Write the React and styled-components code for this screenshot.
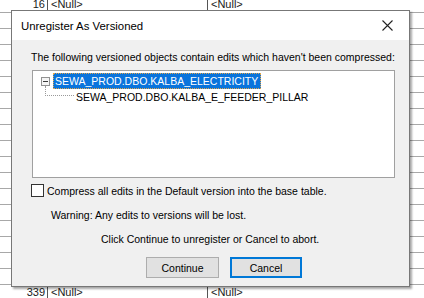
import React from "react";
import styled, { createGlobalStyle } from "styled-components";

const Global = createGlobalStyle`
  html, body {
    margin: 0;
    padding: 0;
    background: #ffffff;
    overflow: hidden;
  }
  body {
    font-family: "Liberation Sans", Arial, sans-serif;
  }
`;

const Screen = styled.div`
  position: relative;
  width: 424px;
  height: 298px;
  overflow: hidden;
  background: #ffffff;
`;

/* table that sits behind the dialog */
const Table = styled.div`
  display: flex;
  flex-direction: column;
  margin-top: -3px;
`;

const TableRow = styled.div`
  display: flex;
  height: 15px;
  border-bottom: 1px solid #a8a8a8;
  font-size: 11px;
  line-height: 15px;
  color: #1a1a1a;
`;

const NumCell = styled.span`
  width: 45px;
  text-align: right;
  padding-right: 2px;
`;

const ValCell = styled.span`
  width: ${(p) => p.w}px;
  border-left: 1px solid #555;
  padding-left: 3px;
  box-sizing: border-box;
`;

/* dialog */
const Dialog = styled.div`
  position: absolute;
  left: 11px;
  top: 10px;
  width: 399px;
  height: 277px;
  box-sizing: border-box;
  border: 1px solid #777;
  background: #f0f0f0;
  box-shadow: 2px 2px 2px rgba(0, 0, 0, 0.35);
  display: flex;
  flex-direction: column;
`;

const TitleBar = styled.div`
  height: 29px;
  background: #ffffff;
  display: flex;
  align-items: center;
  justify-content: space-between;
  padding-left: 9px;
  font-size: 11.4px;
  color: #000;
`;

const CloseBtn = styled.div`
  width: 44px;
  height: 29px;
  display: flex;
  align-items: center;
  justify-content: center;
`;

const Body = styled.div`
  display: flex;
  flex-direction: column;
  padding: 0 14px 0 19px;
  font-size: 10.5px;
  color: #000;
`;

const Label = styled.div`
  margin-top: 11px;
  line-height: 13px;
  white-space: nowrap;
`;

const Tree = styled.div`
  margin: 6px 0 0 1px;
  height: 108px;
  box-sizing: border-box;
  border: 1px solid #a0a0a0;
  background: #fff;
  padding-top: 2px;
  display: flex;
  flex-direction: column;
`;

const TreeRow = styled.div`
  display: flex;
  align-items: center;
  height: 16px;
  white-space: nowrap;
`;

const Expander = styled.span`
  width: 9px;
  height: 9px;
  box-sizing: border-box;
  margin: 0 3px 0 8px;
  border: 1px solid #919191;
  background: #f4f4f4;
  display: flex;
  align-items: center;
  justify-content: center;
  &::after {
    content: "";
    width: 5px;
    height: 1px;
    background: #3a3a3a;
  }
`;

const Selected = styled.span`
  height: 16px;
  line-height: 14px;
  box-sizing: border-box;
  padding: 0 2px 0 1px;
  background: #0a74dc;
  color: #fff;
  border: 1px dotted #e2a64c;
`;

const Branch = styled.span`
  align-self: flex-start;
  width: 29px;
  height: 10px;
  margin: -3px 2px 0 12px;
  box-sizing: border-box;
  border-left: 1px dotted #9a9a9a;
  border-bottom: 1px dotted #9a9a9a;
`;

const CheckRow = styled.label`
  display: flex;
  align-items: center;
  margin-top: 6px;
  height: 13px;
  white-space: nowrap;
`;

const Box = styled.span`
  width: 13px;
  height: 13px;
  box-sizing: border-box;
  border: 1px solid #333;
  background: #fff;
  margin: 0 3px 0 0;
`;

const Note = styled.div`
  margin-top: ${(p) => p.mt}px;
  padding-left: ${(p) => p.pl}px;
  line-height: 13px;
  white-space: nowrap;
`;

const Buttons = styled.div`
  display: flex;
  gap: 11px;
  margin: 11px 0 0 115px;
`;

const Button = styled.div`
  width: ${(p) => (p.primary ? 72 : 73)}px;
  height: 21px;
  box-sizing: border-box;
  background: #e1e1e1;
  border: ${(p) => (p.primary ? "2px solid #0078d7" : "1px solid #adadad")};
  display: flex;
  align-items: center;
  justify-content: center;
  font-size: 10.5px;
`;

const rows = Array.from({ length: 19 }, (_, i) =>
  i === 0 ? "16" : i === 18 ? "339" : null
);

export default function App() {
  return (
    <Screen>
      <Global />
      <Table>
        {rows.map((n, i) => (
          <TableRow key={i}>
            <NumCell>{n}</NumCell>
            <ValCell w={160}>{n && "<Null>"}</ValCell>
            <ValCell w={200}>{n && "<Null>"}</ValCell>
          </TableRow>
        ))}
      </Table>

      <Dialog>
        <TitleBar>
          <span>Unregister As Versioned</span>
          <CloseBtn>
            <svg width="11" height="11" viewBox="0 0 11 11">
              <path d="M0.5 0.5 L10.5 10.5 M10.5 0.5 L0.5 10.5" stroke="#222" strokeWidth="1.1" />
            </svg>
          </CloseBtn>
        </TitleBar>
        <Body>
          <Label>The following versioned objects contain edits which haven't been compressed:</Label>
          <Tree>
            <TreeRow>
              <Expander />
              <Selected>SEWA_PROD.DBO.KALBA_ELECTRICITY</Selected>
            </TreeRow>
            <TreeRow>
              <Branch />
              <span>SEWA_PROD.DBO.KALBA_E_FEEDER_PILLAR</span>
            </TreeRow>
          </Tree>
          <CheckRow>
            <Box />
            <span>Compress all edits in the Default version into the base table.</span>
          </CheckRow>
          <Note mt={12} pl={20}>Warning: Any edits to versions will be lost.</Note>
          <Note mt={11} pl={70}>Click Continue to unregister or Cancel to abort.</Note>
          <Buttons>
            <Button>Continue</Button>
            <Button primary>Cancel</Button>
          </Buttons>
        </Body>
      </Dialog>
    </Screen>
  );
}
